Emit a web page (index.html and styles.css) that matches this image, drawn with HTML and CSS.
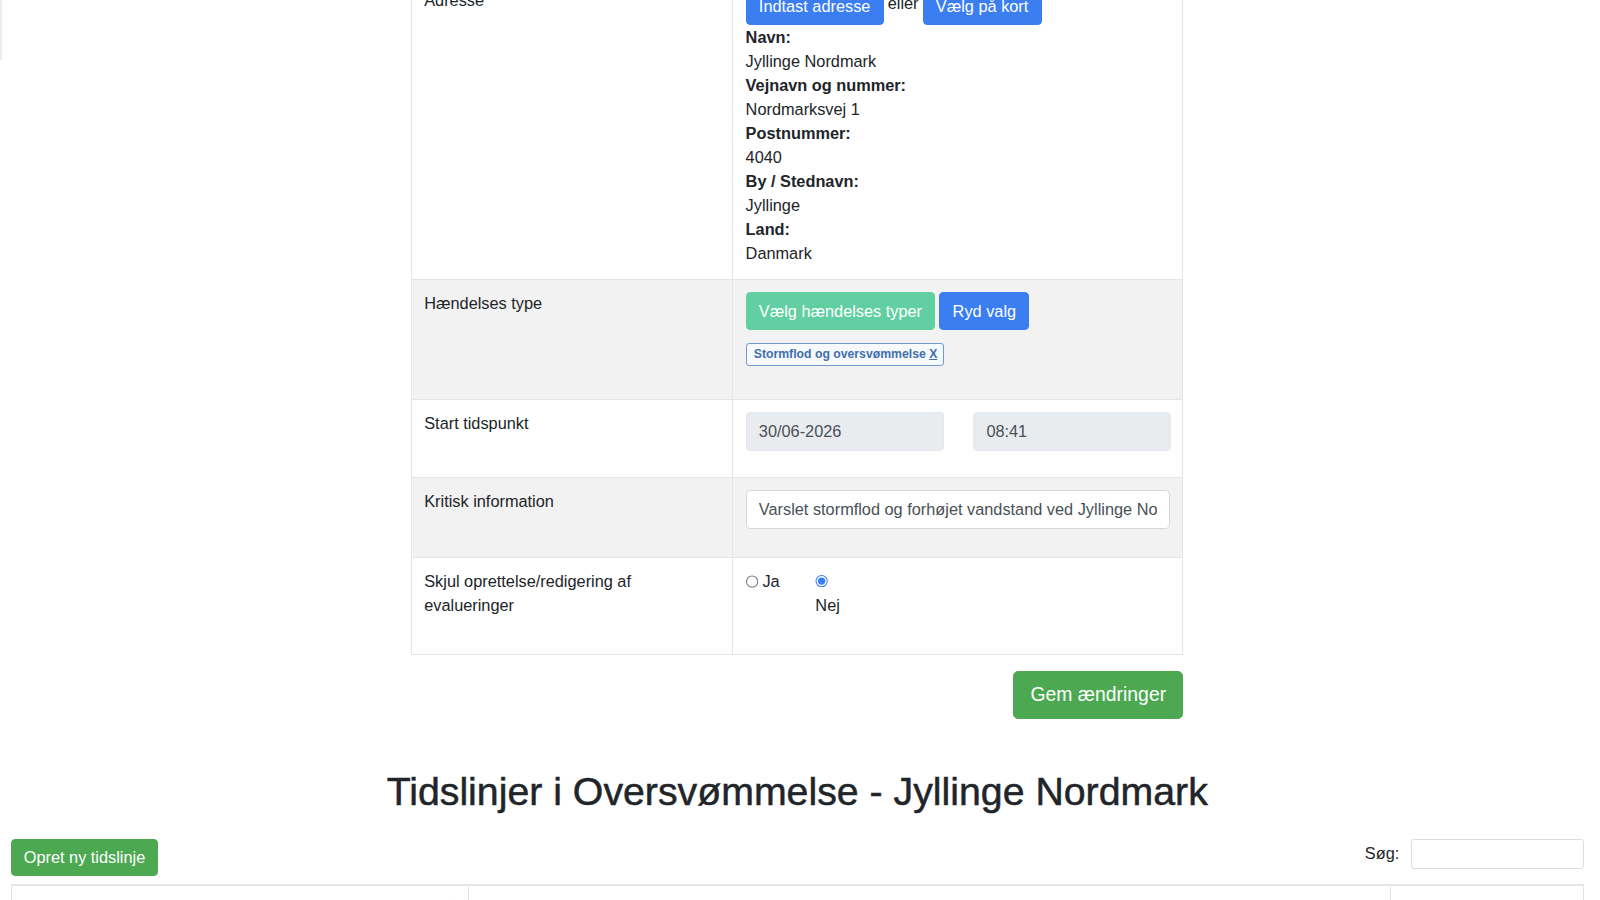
FILE: index.html
```html
<!DOCTYPE html>
<html lang="da">
<head>
<meta charset="utf-8">
<title>Hændelse</title>
<link rel="stylesheet" href="styles.css">
</head>
<body>
<div class="side-edge"></div>
<div class="page">
  <div class="form-wrap">
    <table class="form-table">
      <tr class="row-white">
        <td class="lbl lbl-addr">Adresse</td>
        <td class="val">
          <div class="addr-btns">
            <button class="btn btn-blue">Indtast adresse</button>
            <span class="eller">eller</span>
            <button class="btn btn-blue">Vælg på kort</button>
          </div>
          <div class="addr-info">
            <div class="b">Navn:</div>
            <div>Jyllinge Nordmark</div>
            <div class="b">Vejnavn og nummer:</div>
            <div>Nordmarksvej 1</div>
            <div class="b">Postnummer:</div>
            <div>4040</div>
            <div class="b">By / Stednavn:</div>
            <div>Jyllinge</div>
            <div class="b">Land:</div>
            <div>Danmark</div>
          </div>
        </td>
      </tr>
      <tr class="row-grey">
        <td class="lbl">Hændelses type</td>
        <td class="val">
          <div class="type-btns">
            <button class="btn btn-mint">Vælg hændelses typer</button>
            <button class="btn btn-blue">Ryd valg</button>
          </div>
          <div class="tags">
            <span class="tag">Stormflod og oversvømmelse <u>X</u></span>
          </div>
        </td>
      </tr>
      <tr class="row-white">
        <td class="lbl">Start tidspunkt</td>
        <td class="val">
          <div class="dt-grid">
            <input class="inp inp-ro" type="text" value="30/06-2026" readonly>
            <input class="inp inp-ro" type="text" value="08:41" readonly>
          </div>
        </td>
      </tr>
      <tr class="row-grey">
        <td class="lbl">Kritisk information</td>
        <td class="val">
          <input class="inp inp-full" type="text" value="Varslet stormflod og forhøjet vandstand ved Jyllinge Nordmark">
        </td>
      </tr>
      <tr class="row-white">
        <td class="lbl">Skjul oprettelse/redigering af evalueringer</td>
        <td class="val">
          <div class="radios">
            <label class="opt opt-ja"><input type="radio" name="skjul"><span>Ja</span></label>
            <label class="opt opt-stack"><input type="radio" name="skjul" checked><span class="opt-text">Nej</span></label>
          </div>
        </td>
      </tr>
    </table>
    <div class="save-line">
      <button class="btn btn-green btn-lg">Gem ændringer</button>
    </div>
  </div>

  <h1 class="title">Tidslinjer i Oversvømmelse - Jyllinge Nordmark</h1>

  <div class="tool-line">
    <button class="btn btn-green btn-sm">Opret ny tidslinje</button>
    <label class="search">Søg: <input class="search-inp" type="search"></label>
  </div>

  <table class="list-table">
    <tr>
      <th class="c1"><span class="sort"></span></th>
      <th class="c2"></th>
      <th class="c3"></th>
    </tr>
  </table>
</div>
</body>
</html>
```

FILE: styles.css
```css
html, body {
  margin: 0;
  padding: 0;
  background: #ffffff;
}
body {
  font-family: "Liberation Sans", Arial, Helvetica, sans-serif;
  font-size: 16px;
  line-height: 23.5px;
  color: #212529;
  overflow: hidden;
}
.side-edge {
  position: fixed;
  left: 0;
  top: 0;
  width: 2px;
  height: 60px;
  background: #ececec;
}
.page {
  zoom: 1.0204;
  margin-left: 10.3px;
  width: 1542px;
}
.form-wrap {
  width: 757px;
  margin: -26px auto 0 auto;
}
.form-table {
  width: 757px;
  border-collapse: collapse;
  table-layout: fixed;
}
.form-table td {
  border: 1px solid #e3e5e8;
  padding: 12px;
  vertical-align: top;
}
.form-table td.lbl {
  width: 290px;
}
.form-table td.lbl-addr {
  padding-top: 14px;
}
.row-grey td {
  background: #f2f2f2;
}
.row-white td {
  background: #ffffff;
}
.btn {
  font-family: "Liberation Sans", Arial, Helvetica, sans-serif;
  font-size: 16px;
  line-height: 24px;
  padding: 6px 12px;
  border: 1px solid transparent;
  border-radius: 4px;
  color: #ffffff;
  cursor: pointer;
  display: inline-block;
  vertical-align: middle;
}
.btn-blue {
  background: #3a7ef2;
  border-color: #3a7ef2;
}
.btn-mint {
  background: #62cfa2;
  border-color: #62cfa2;
}
.btn-green {
  background: #4ca851;
  border-color: #4ca851;
}
.btn-lg {
  font-size: 19px;
  line-height: 29px;
  padding: 8px 16px;
  border-radius: 5px;
}
.btn-sm {
  line-height: 22px;
}
.addr-btns {
  display: flex;
  align-items: flex-start;
  gap: 4px;
}
.eller {
  line-height: 24px;
  margin-top: 4px;
}
.addr-info {
  margin-top: 1px;
}
.b {
  font-weight: bold;
}
.type-btns {
  display: flex;
  gap: 4px;
}
.tags {
  margin-top: 10px;
  margin-bottom: 20px;
}
.tag {
  display: inline-block;
  font-size: 12px;
  line-height: 15px;
  font-weight: bold;
  color: #3f6fae;
  background: #f7fafd;
  border: 1px solid #6f98cf;
  border-radius: 3px;
  padding: 3px 6px 3px 7px;
}
.dt-grid {
  display: grid;
  grid-template-columns: 194px 194px;
  column-gap: 29px;
  margin-bottom: 14px;
}
.inp {
  font-family: "Liberation Sans", Arial, Helvetica, sans-serif;
  font-size: 16px;
  line-height: 24px;
  height: 38px;
  box-sizing: border-box;
  padding: 6px 12px;
  border: 1px solid #d5d9de;
  border-radius: 4px;
  color: #495057;
  background: #ffffff;
  outline: none;
}
.inp-ro {
  background: #e9ecef;
  border-color: #e4e7eb;
  width: 194px;
}
.inp-full {
  width: 100%;
  margin-bottom: 15px;
  display: block;
}
.radios {
  display: flex;
  align-items: flex-start;
  margin-bottom: 23px;
}
.opt {
  display: flex;
  align-items: center;
}
.opt-ja {
  margin-right: 35px;
}
.opt input {
  margin: 0 3.5px 0 0;
  width: 13px;
  height: 13px;
  accent-color: #3a7ef2;
}
.opt-stack {
  display: block;
}
.opt-stack input {
  vertical-align: -1px;
}
.opt-text {
  display: block;
}
.save-line {
  display: flex;
  justify-content: flex-end;
  margin-top: 16px;
}
.title {
  text-align: center;
  font-size: 38.5px;
  line-height: 46px;
  font-weight: normal;
  -webkit-text-stroke: 0.5px #212529;
  margin: 48px 0 24px 0;
}
.tool-line {
  display: flex;
  justify-content: space-between;
  align-items: flex-start;
}
.search {
  display: flex;
  align-items: center;
  gap: 11px;
}
.search-inp {
  width: 170px;
  height: 29.5px;
  box-sizing: border-box;
  border: 1px solid #dcdcdc;
  border-radius: 3px;
  outline: none;
}
.list-table {
  width: 1542px;
  border-collapse: collapse;
  margin-top: 8px;
  table-layout: fixed;
}
.list-table th {
  border: 1px solid #e3e3e3;
  border-top: 2px solid #e6e6e6;
  height: 40px;
}
.list-table .c1 {
  width: 445px;
  position: relative;
}
.list-table .c3 {
  width: 186px;
}
.sort {
  position: absolute;
  right: 12px;
  top: 12px;
  width: 4px;
  height: 4px;
  border-right: 1px solid #c8c8c8;
  border-bottom: 1px solid #c8c8c8;
  transform: rotate(45deg);
}
```
